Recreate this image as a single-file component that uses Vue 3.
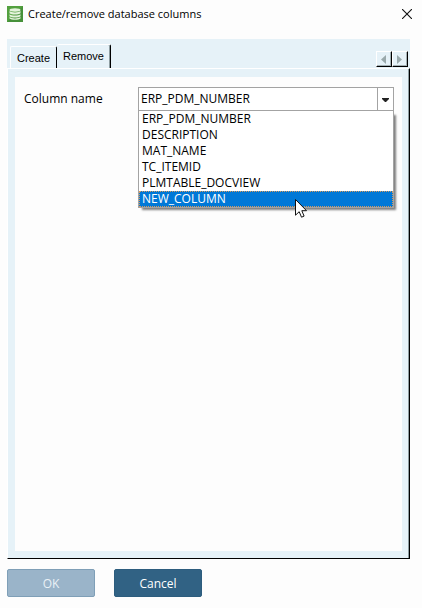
<script setup>
import { ref } from 'vue';

const tabs = ['Create', 'Remove'];
const activeTab = ref('Remove');

const columns = [
  'ERP_PDM_NUMBER',
  'DESCRIPTION',
  'MAT_NAME',
  'TC_ITEMID',
  'PLMTABLE_DOCVIEW',
  'NEW_COLUMN'
];
const selected = ref('ERP_PDM_NUMBER');
const hovered = ref('NEW_COLUMN');
const open = ref(true);

function choose(column) {
  selected.value = column;
  open.value = false;
}
</script>

<template>
  <div class="dialog">
    <header class="titlebar">
      <svg class="logo" width="16" height="16" viewBox="0 0 16 16" aria-hidden="true">
        <rect width="16" height="16" fill="#53a03f" />
        <path d="M0 16L16 0V16Z" fill="#47913a" />
        <g fill="#e4f3dc">
          <ellipse cx="8" cy="4" rx="5.5" ry="1.7" />
          <path d="M2.5 5.1C4 6.8 12 6.8 13.5 5.1V7.3C12 9 4 9 2.5 7.3Z" />
          <path d="M2.5 8.2C4 9.9 12 9.9 13.5 8.2V10.2C12 12 4 12 2.5 10.2Z" />
          <path d="M2.5 11.1C4 12.8 12 12.8 13.5 11.1V12.4C12 14.2 4 14.2 2.5 12.4Z" />
        </g>
      </svg>
      <h1>Create/remove database columns</h1>
      <button class="close" type="button" aria-label="Close">
        <svg width="10" height="10" viewBox="0 0 10 10">
          <path d="M0 0L10 10M10 0L0 10" stroke="#111" stroke-width="1.1" />
        </svg>
      </button>
    </header>

    <main class="panel">
      <div class="tabstrip">
        <div class="tabs" role="tablist">
          <button
            v-for="tab in tabs"
            :key="tab"
            type="button"
            role="tab"
            class="tab"
            :class="{ active: tab === activeTab }"
            :aria-selected="tab === activeTab"
            @click="activeTab = tab"
          >{{ tab }}</button>
        </div>
        <div class="scrollers">
          <button type="button" aria-label="Previous tab">
            <svg width="5" height="9" viewBox="0 0 5 9"><path d="M5 0V9L0 4.5Z" fill="#9aa9ab" /></svg>
          </button>
          <button type="button" aria-label="Next tab">
            <svg width="5" height="9" viewBox="0 0 5 9"><path d="M0 0V9L5 4.5Z" fill="#9aa9ab" /></svg>
          </button>
        </div>
      </div>

      <div class="frame">
        <section class="page" role="tabpanel">
          <div class="field">
            <label for="column">Column name</label>
            <div class="combo">
              <select id="column" v-model="selected" @mousedown.prevent="open = !open">
                <option v-for="column in columns" :key="column">{{ column }}</option>
              </select>
              <span class="arrow">
                <svg width="7" height="4" viewBox="0 0 7 4"><path d="M0 0H7V1L4 4H3L0 1Z" fill="#222" /></svg>
              </span>
              <ul v-if="open" class="list" role="listbox" aria-label="Column name">
                <li
                  v-for="column in columns"
                  :key="column"
                  role="option"
                  :aria-selected="column === hovered"
                  :class="{ hovered: column === hovered }"
                  @mouseenter="hovered = column"
                  @click="choose(column)"
                >{{ column }}</li>
              </ul>
              <svg v-if="open" class="pointer" width="12" height="19" viewBox="0 0 12 19" aria-hidden="true">
                <path
                  d="M.5 .5V16.2L4.2 12.7L6.5 18.2L9.1 17.1L6.8 11.7H11.5Z"
                  fill="#fff"
                  stroke="#111"
                />
              </svg>
            </div>
          </div>
        </section>
      </div>
    </main>

    <footer class="actions">
      <button type="button" disabled>OK</button>
      <button type="button">Cancel</button>
    </footer>
  </div>
</template>

<style>
body {
  background: #fdfdfd;
}
</style>

<style scoped>
.dialog {
  box-sizing: border-box;
  min-height: 100vh;
  display: flex;
  flex-direction: column;
  padding: 0 12px 11px 7px;
  background: #fdfdfd;
  color: #000;
  font-family: "Segoe UI", "Open Sans", "Noto Sans", sans-serif;
  font-size: 12px;
}
button {
  font: inherit;
  color: inherit;
  padding: 0;
  border: none;
  background: none;
}
.titlebar {
  display: flex;
  align-items: center;
  gap: 5px;
  height: 27px;
  margin-right: -2px;
  margin-bottom: 12px;
}
.titlebar h1 {
  flex: 1;
  margin: 0;
  font-size: 11px;
  font-weight: normal;
  white-space: nowrap;
}
.logo,
.close svg {
  display: block;
}
.panel {
  flex: 1;
  display: flex;
  flex-direction: column;
}
.tabstrip {
  display: flex;
  justify-content: space-between;
  align-items: flex-end;
  height: 29px;
  padding: 0 2px 0 3px;
  background: #e6f2f8;
}
.tabs {
  display: flex;
  align-items: flex-end;
}
.tab {
  height: 22px;
  padding: 0 6px;
  border-top: 1px solid #fff;
  border-left: 1px solid #fff;
  border-right: 1px solid #000;
  border-radius: 2px 2px 0 0;
  font-family: Arial, "Liberation Sans", sans-serif;
  font-size: 11px;
}
.tab.active {
  height: 24px;
  padding-bottom: 2px;
  border-left: none;
  box-shadow: inset -1px 0 #8d9da1;
}
.scrollers {
  display: flex;
  padding-bottom: 1px;
}
.scrollers button {
  box-sizing: border-box;
  display: flex;
  align-items: center;
  justify-content: center;
  width: 16px;
  height: 16px;
  padding-right: 2px;
  border: 1px solid;
  border-color: #fff #000 #000 #fff;
  box-shadow: inset -1px -1px #a3b0b3;
}
.frame {
  flex: 1;
  display: flex;
  padding: 8px 7px 7px;
  border: 1px solid;
  border-color: #fff #000 #000 #fff;
  box-shadow: inset -1px 0 #8d9da1;
  background: #e6f2f8;
}
.page {
  flex: 1;
  padding: 10px 8px 10px 9px;
  background: #fdfdfd;
}
.field {
  display: flex;
  align-items: center;
}
.field label {
  width: 114px;
  padding-bottom: 2px;
}
.combo {
  position: relative;
  flex: 1;
  display: flex;
  height: 22px;
  border: 1px solid #a3a3a3;
  background: #fff;
}
.combo select {
  appearance: none;
  flex: 1;
  min-width: 0;
  padding: 0 2px 2px;
  border: none;
  outline: none;
  background: none;
  color: #000;
  font: inherit;
}
.arrow {
  display: flex;
  align-items: center;
  justify-content: center;
  width: 15px;
  padding-top: 2px;
  border-left: 1px solid #a3a3a3;
  pointer-events: none;
}
.list {
  position: absolute;
  top: 23px;
  left: -1px;
  right: -1px;
  margin: 0;
  padding: 0;
  border: 1px solid #a3a3a3;
  border-top: none;
  background: #fff;
  box-shadow: 3px 3px 2px -1px rgba(0, 0, 0, 0.5);
  list-style: none;
}
.list li {
  padding: 0 3px;
  line-height: 16px;
}
.list .hovered {
  background: #0078d7;
  color: #fff;
  outline: 1px dotted #d99a5b;
  outline-offset: -1px;
}
.pointer {
  position: absolute;
  top: 111px;
  left: 156px;
}
.actions {
  display: flex;
  gap: 19px;
  margin-top: 10px;
}
.actions button {
  width: 88px;
  height: 28px;
  border: 1px solid #2d5d7e;
  border-radius: 2px;
  background: #316284;
  color: #fff;
}
.actions button:disabled {
  border-color: #7f9fb7;
  background: #9ab4c9;
  color: #eaf1f6;
}
</style>
